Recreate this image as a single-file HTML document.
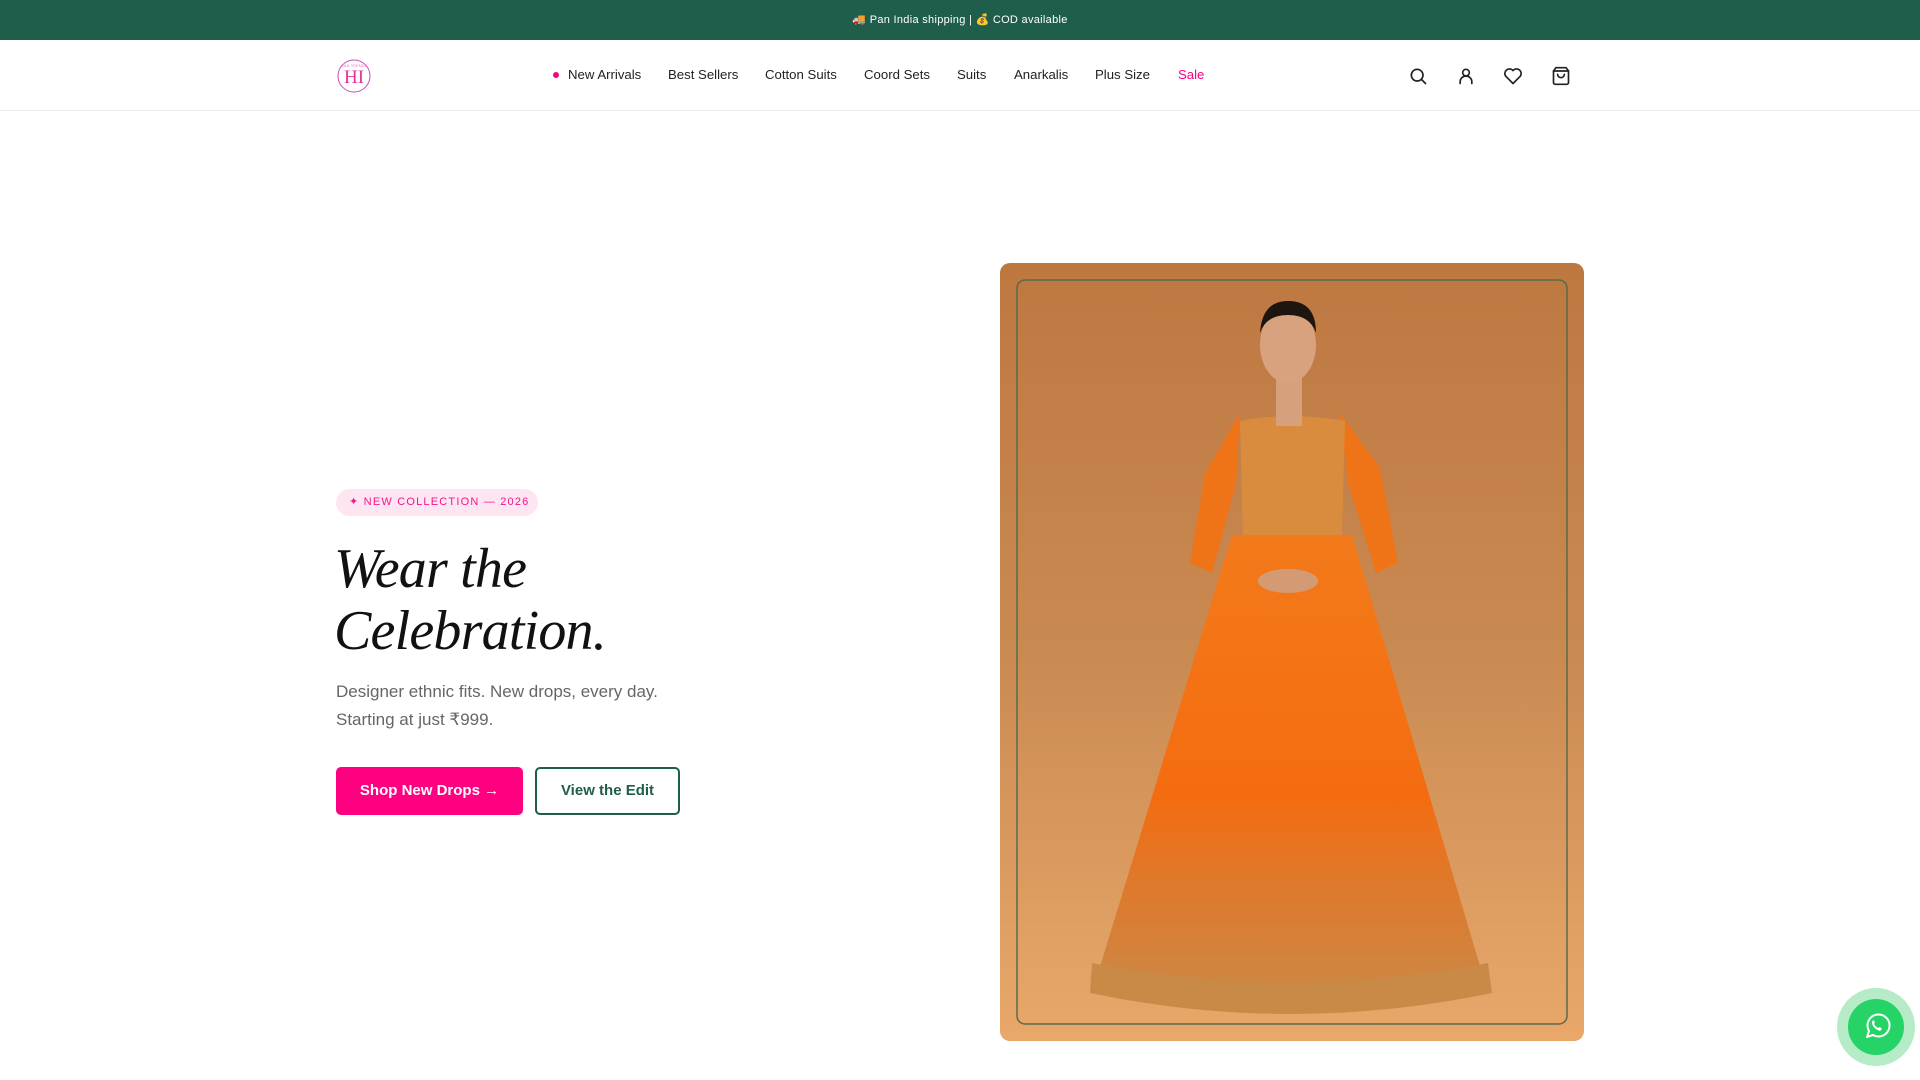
<!DOCTYPE html>
<html><head><meta charset="utf-8"><style>
*{margin:0;padding:0;box-sizing:border-box}
body{width:1920px;height:1080px;overflow:hidden;background:#fff;font-family:"Liberation Sans",sans-serif;position:relative}
.top{height:40px;background:#1e5e4a;color:#fff;font-size:11px;text-align:center;line-height:40px;letter-spacing:.3px}
.nav{height:71px;border-bottom:1px solid #ececec;position:relative}
.nav a{position:absolute;top:27px;font-size:13.2px;color:#222;text-decoration:none;white-space:nowrap}
.ic{position:absolute}
.badge{position:absolute;left:336px;top:489px;width:202px;height:27px;border-radius:14px;background:#fde6f1;color:#f0178a;font-size:11px;letter-spacing:1.2px;line-height:27px;padding-left:13px}
h1{position:absolute;left:334px;top:538px;font-family:"Liberation Serif",serif;font-style:italic;font-weight:normal;font-size:56px;line-height:62px;color:#111;letter-spacing:-.8px}
p{position:absolute;left:336px;top:678px;font-size:17px;line-height:28px;color:#666}
.b1{position:absolute;left:336px;top:767px;width:187px;height:48px;border-radius:5px;background:#ff0080;color:#fff;font-weight:bold;font-size:15px;text-align:center;line-height:48px}
.b2{position:absolute;left:535px;top:767px;width:145px;height:48px;border-radius:5px;border:2px solid #1e5e4a;color:#1e5e4a;font-weight:bold;font-size:15px;text-align:center;line-height:44px}
.img{position:absolute;left:1000px;top:263px;width:584px;height:778px;border-radius:10px;overflow:hidden}
</style></head><body>
<div class="top">🚚 Pan India shipping | 💰 COD available</div>
<div class="nav">
<svg style="position:absolute;left:335px;top:17px" width="38" height="38" viewBox="0 0 38 38"><circle cx="19" cy="19" r="16" fill="none" stroke="#c94fb0" stroke-width="1"/><text x="19" y="26" text-anchor="middle" font-family="Liberation Serif" font-size="19" fill="#e3339d">HI</text><text x="19" y="10" text-anchor="middle" font-size="4" fill="#e07ac0">SILK TRENDZ</text></svg>
<span style="position:absolute;left:553px;top:32px;width:6px;height:6px;border-radius:50%;background:#ff0080"></span>
<a style="left:568px">New Arrivals</a><a style="left:668px">Best Sellers</a><a style="left:765px">Cotton Suits</a><a style="left:864px">Coord Sets</a><a style="left:957px">Suits</a><a style="left:1014px">Anarkalis</a><a style="left:1095px">Plus Size</a><a style="left:1178px;color:#ff0080">Sale</a>
<svg class="ic" style="left:1408px;top:26px" width="20" height="20" viewBox="0 0 24 24" fill="none" stroke="#222" stroke-width="2" stroke-linecap="round"><circle cx="11" cy="11" r="7"/><path d="M16.5 16.5L21 21"/></svg>
<svg class="ic" style="left:1456px;top:26px" width="20" height="20" viewBox="0 0 24 24" fill="none" stroke="#222" stroke-width="2" stroke-linecap="round"><circle cx="12" cy="8" r="4"/><path d="M5 21v-2a7 7 0 0 1 14 0v2"/></svg>
<svg class="ic" style="left:1503px;top:26px" width="20" height="20" viewBox="0 0 24 24" fill="none" stroke="#222" stroke-width="2" stroke-linejoin="round"><path d="M12 21l-8.5-8.5a5 5 0 0 1 8.5-7 5 5 0 0 1 8.5 7z"/></svg>
<svg class="ic" style="left:1551px;top:26px" width="20" height="20" viewBox="0 0 24 24" fill="none" stroke="#222" stroke-width="2" stroke-linejoin="round" stroke-linecap="round"><path d="M6 2L3 6v14a2 2 0 0 0 2 2h14a2 2 0 0 0 2-2V6l-3-4z"/><path d="M3 6h18M16 10a4 4 0 0 1-8 0"/></svg>
</div>
<div class="badge">✦ NEW COLLECTION — 2026</div>
<h1>Wear the<br>Celebration.</h1>
<p>Designer ethnic fits. New drops, every day.<br>Starting at just ₹999.</p>
<div class="b1">Shop New Drops →</div>
<div class="b2">View the Edit</div>
<div class="img"><svg width="584" height="778" viewBox="0 0 584 778">
<defs><linearGradient id="bg" x1="0" y1="0" x2="0" y2="1"><stop offset="0" stop-color="#bd7840"/><stop offset=".5" stop-color="#c98a52"/><stop offset="1" stop-color="#e9a86a"/></linearGradient>
<linearGradient id="sk" x1="0" y1="0" x2="0" y2="1"><stop offset="0" stop-color="#f37a1a"/><stop offset=".55" stop-color="#f46c10"/><stop offset=".72" stop-color="#e0782a"/><stop offset="1" stop-color="#c98a48"/></linearGradient></defs>
<rect width="584" height="778" fill="url(#bg)"/>
<path d="M240 150 L205 210 L190 300 L212 310 L236 220 Z" fill="#ef7418"/>
<path d="M340 150 L380 205 L398 300 L376 310 L348 220 Z" fill="#ef7418"/>
<path d="M232 272 L352 272 L488 730 Q290 765 92 730 Z" fill="url(#sk)"/>
<path d="M92 700 Q290 740 488 700 L492 730 Q290 772 90 730 Z" fill="#c98a48"/>
<path d="M240 158 Q290 148 345 158 L342 272 L243 272 Z" fill="#d98c3e"/>
<rect x="276" y="115" width="26" height="48" fill="#d7a07c"/>
<ellipse cx="288" cy="82" rx="28" ry="38" fill="#d9a27e"/>
<path d="M260 70 Q262 38 288 38 Q316 38 316 70 Q310 52 288 52 Q266 52 260 70 Z" fill="#1d1510"/>
<ellipse cx="288" cy="318" rx="30" ry="12" fill="#d39a74"/>
<rect x="17" y="17" width="550" height="744" rx="8" fill="none" stroke="#5a6a4a" stroke-width="1.5"/>
</svg></div>
<svg style="position:absolute;left:1837px;top:988px" width="80" height="80" viewBox="0 0 80 80"><circle cx="39" cy="39" r="39" fill="#b6ebc8"/><circle cx="39" cy="39" r="28" fill="#25d366"/><path d="M30 49l2-6a11 11 0 1 1 4 4z" fill="none" stroke="#fff" stroke-width="2" stroke-linejoin="round"/><path d="M35 34q0 6 8 9l2-2-2-2-2 1q-3-2-4-4l1-2-2-2z" fill="#fff"/></svg>
</body></html>
